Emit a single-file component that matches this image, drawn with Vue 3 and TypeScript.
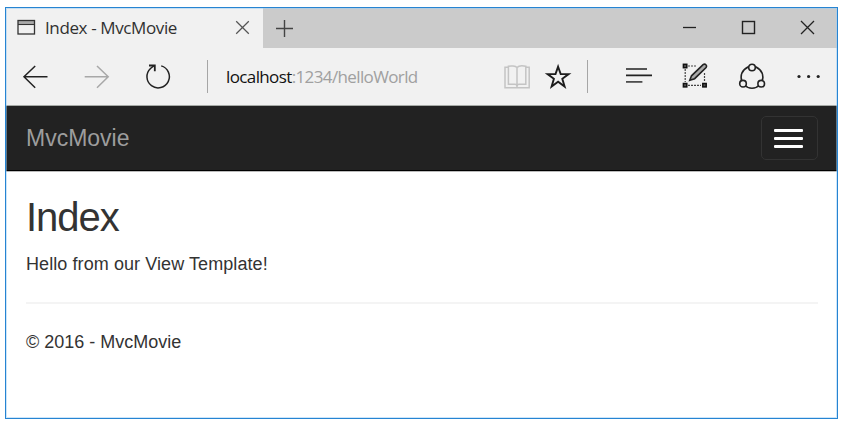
<script setup lang="ts">
const tabTitle = 'Index - MvcMovie'
const host = 'localhost'
const path = ':1234/helloWorld'
const brand = 'MvcMovie'
const heading = 'Index'
const message = 'Hello from our View Template!'
const copyright = '© 2016 - MvcMovie'
</script>

<template>
  <div class="screen">
    <div class="window">
      <header class="titlebar">
        <div class="tab">
          <svg class="page-icon" width="19" height="17" viewBox="0 0 19 17">
            <path d="M1 3.500h16.500" stroke="#aaa" stroke-width="3" />
            <rect x="1" y="1.500" width="16.500" height="13.500" fill="none" stroke="#333" stroke-width="1.300" />
            <path d="M1 5.500h16.500" stroke="#333" stroke-width="1.100" />
          </svg>
          <span class="tab-title">{{ tabTitle }}</span>
          <svg class="tab-close" width="15" height="15" viewBox="0 0 15 15">
            <path d="M1.200 1.200l12.600 12.600M13.800 1.200L1.200 13.800" stroke="#555" stroke-width="1.250" />
          </svg>
        </div>
        <svg class="new-tab" width="19" height="19" viewBox="0 0 19 19">
          <path d="M1 9.500h17M9.500 1v17" stroke="#444" stroke-width="1.400" />
        </svg>
        <div class="controls">
          <svg width="15" height="15" viewBox="0 0 15 15"><path d="M1 7.500h13" stroke="#222" stroke-width="1.300" /></svg>
          <svg width="15" height="15" viewBox="0 0 15 15"><rect x="1.500" y="1.500" width="12" height="12" fill="none" stroke="#222" stroke-width="1.400" /></svg>
          <svg width="15" height="15" viewBox="0 0 15 15"><path d="M1 1l13 13M14 1L1 14" stroke="#222" stroke-width="1.300" /></svg>
        </div>
      </header>

      <div class="toolbar">
        <svg class="icon back" viewBox="0 0 29 29"><path d="M26.500 14.800H3M14.200 4L3 14.800l11.200 11" fill="none" stroke="#222" stroke-width="1.500" /></svg>
        <svg class="icon forward" viewBox="0 0 29 29"><path d="M2.700 14.800h23.500M15 4l11.200 10.800L15 25.800" fill="none" stroke="#a8a8a8" stroke-width="1.500" /></svg>
        <svg class="icon refresh" viewBox="0 0 29 29">
          <path d="M17.200 3.900A11.200 11.200 0 1 1 6.500 6.500L10 3.700" fill="none" stroke="#222" stroke-width="1.500" />
          <path d="M5 3.500h5.800v5.800" fill="none" stroke="#222" stroke-width="1.800" />
        </svg>
        <i class="divider first" />
        <div class="address"><span class="host">{{ host }}</span><span>{{ path }}</span></div>
        <svg class="icon book" viewBox="0 0 29 29">
          <g fill="none" stroke="#c4c4c4" stroke-width="1.500">
            <path d="M5 5.200H2v20.600h24.200V5.200H23" />
            <path d="M14 5.500C12.500 3.800 8 3.600 5.400 4.200V22.300h6.500q2.100 0 2.100 2.200 0-2.200 2.100-2.200h6.700V4.200C20 3.600 15.500 3.800 14 5.500zM14 5.500v20" />
          </g>
        </svg>
        <svg class="icon star" viewBox="0 0 29 29"><path d="M14.100 4.700l2.600 7.400h7.900l-6.300 4.700 2.300 7.800-6.500-4.800-6.500 4.800 2.300-7.800-6.300-4.700h7.900z" fill="none" stroke="#1c1c1c" stroke-width="1.900" /></svg>
        <i class="divider second" />
        <svg class="icon hub" viewBox="0 0 29 29">
          <path d="M1 7h21M1 13.400h26" stroke="#222" stroke-width="1.700" />
          <path d="M1 19.900h16.400" stroke="#444" stroke-width="1.700" />
        </svg>
        <svg class="icon note" viewBox="0 0 29 29">
          <path d="M8 4h8M5.200 7v13M8 23.300h13M24.500 11v9" fill="none" stroke="#444" stroke-width="1.200" stroke-dasharray="2 1" />
          <g fill="#555" stroke="#111" stroke-width="1.500"><rect x="3.400" y="2.300" width="3.400" height="3.400" /><rect x="3.400" y="21.500" width="3.400" height="3.400" /><rect x="22.800" y="21.500" width="3.400" height="3.400" /></g>
          <path d="M9.800 18.300l1.700-4.500L23.100 2.700c2-1.600 4.500.7 3 2.900L14.600 16.700z" fill="#aaa" stroke="#222" stroke-width="1.600" />
        </svg>
        <svg class="icon share" viewBox="0 0 29 29">
          <circle cx="14" cy="15.300" r="10.900" fill="none" stroke="#222" stroke-width="1.600" />
          <g fill="#f1f1f1" stroke="#222" stroke-width="1.600"><circle cx="14" cy="5.500" r="3.300" /><circle cx="5" cy="21.700" r="3.300" /><circle cx="23.200" cy="21.700" r="3.300" /></g>
        </svg>
        <svg class="icon more" viewBox="0 0 29 29"><g fill="#222"><circle cx="5" cy="14.500" r="1.600" /><circle cx="14.600" cy="14.500" r="1.600" /><circle cx="24.200" cy="14.500" r="1.600" /></g></svg>
      </div>

      <nav class="navbar">
        <span class="brand">{{ brand }}</span>
        <button class="toggle" type="button"><i /><i /><i /></button>
      </nav>

      <main class="content">
        <h1>{{ heading }}</h1>
        <p class="message">{{ message }}</p>
        <hr />
        <footer>{{ copyright }}</footer>
      </main>
    </div>
  </div>
</template>

<style>
body { margin: 0; background: #fff; }
</style>

<style scoped>
* { box-sizing: border-box; }
svg { display: block; flex: none; }
.screen { width: 846px; height: 426px; padding: 7px 0 0 5px; overflow: hidden; }
.window {
  position: relative;
  width: 833px; height: 412px;
  border: 1px solid #2684d2;
  background: #fff;
  font-family: "Liberation Sans", Arial, sans-serif;
  color: #333;
}
.window::after { content: ""; position: absolute; inset: 0; border: 1px solid rgba(155, 205, 245, .5); pointer-events: none; }
.titlebar { height: 40px; display: flex; align-items: center; background: #cbcbcb; }
.tab { width: 257px; height: 40px; display: flex; align-items: center; background: #f1f1f1; padding-left: 11px; }
.page-icon { margin-top: -2px; }
.tab-title { width: 133px; margin-left: 9px; font: 17px/22px "Open Sans", "Noto Sans", sans-serif; letter-spacing: -.38px; white-space: nowrap; color: #303030; }
.tab-close { margin-left: 57px; margin-top: -1px; }
.new-tab { margin-left: 12px; }
.controls { display: flex; gap: 44px; margin-left: auto; margin-right: 22px; padding-bottom: 1px; }
.toolbar { height: 57px; display: flex; align-items: center; background: #f1f1f1; padding-left: 15px; }
.icon { width: 29px; height: 29px; }
.forward { margin-left: 32px; }
.refresh { margin-left: 33px; }
.divider { width: 1px; height: 33px; background: #a6a6a6; }
.first { margin-left: 34px; }
.address { width: 277px; margin-left: 18px; font: 17px/22px "Open Sans", "Noto Sans", sans-serif; letter-spacing: -.62px; white-space: nowrap; color: #a0a0a0; }
.host { color: #111; }
.star { margin-left: 12px; }
.second { margin-left: 14px; }
.hub { margin-left: 37px; }
.note { margin-left: 26px; }
.share { margin-left: 29px; }
.more { margin-left: 27px; }
.navbar { height: 66px; display: flex; align-items: center; justify-content: space-between; padding: 0 19px 0 20px; background: #222; border-top: 1px solid #a6aaa6; border-bottom: 1px solid #000; }
.brand { font-size: 23px; line-height: 28px; color: #9d9d9d; }
.toggle { width: 57px; height: 44px; padding: 0 2px 0 0; display: flex; flex-direction: column; align-items: center; justify-content: center; gap: 5px; background: #222; border: 1px solid #333; border-radius: 5px; }
.toggle i { width: 29px; height: 3px; background: #fff; border-radius: 1px; }
.content { padding: 21px 19px 0 20px; border-top: 1px solid #bbb; }
h1 { margin: 0; font-size: 40px; line-height: 48px; font-weight: 400; letter-spacing: -1px; }
.message { margin: 11px 0 0; font-size: 18px; line-height: 24px; letter-spacing: .08px; }
hr { height: 2px; margin: 26px 0 0; border: 0; background: #f4f4f4; }
footer { margin-top: 26px; font-size: 18px; line-height: 24px; }
</style>
